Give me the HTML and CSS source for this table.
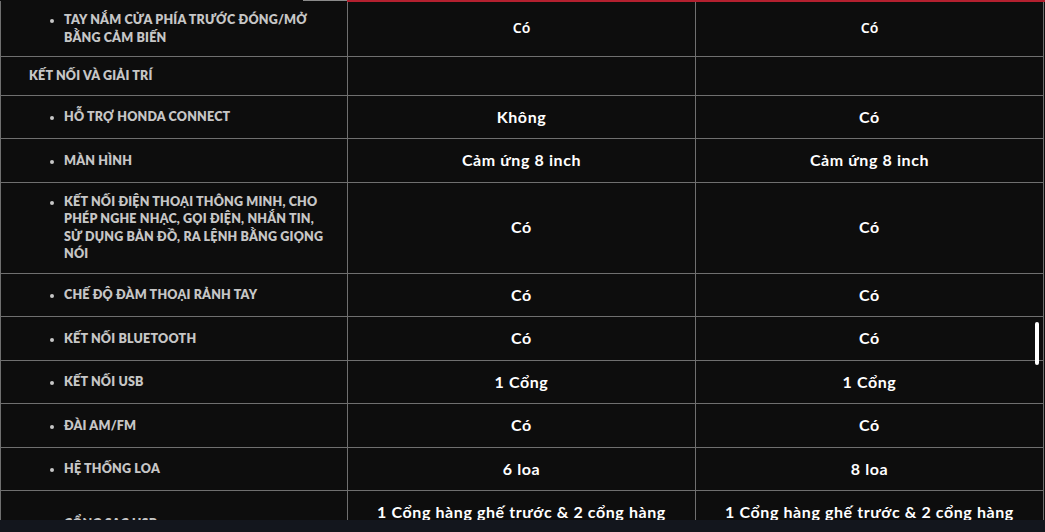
FILE: index.html
```html
<!DOCTYPE html>
<html lang="vi">
<head>
<meta charset="utf-8">
<title>Thông số kỹ thuật</title>
<link rel="stylesheet" href="styles.css">
</head>
<body>
<div class="page">
  <div class="viewport">
    <div class="top-edge">
      <span class="edge-grey"></span>
      <span class="edge-red"><span class="edge-red-thick"></span></span>
    </div>
    <table class="spec">
      <colgroup><col class="c1"><col class="c2"><col class="c3"></colgroup>
      <tbody>
        <tr>
          <td class="label"><ul><li>Tay nắm cửa phía trước đóng/mở bằng cảm biến</li></ul></td>
          <td class="val val-alt">Có</td>
          <td class="val val-alt">Có</td>
        </tr>
        <tr class="group">
          <td class="label group-title">Kết nối và giải trí</td>
          <td></td>
          <td></td>
        </tr>
        <tr>
          <td class="label"><ul><li>Hỗ trợ Honda Connect</li></ul></td>
          <td class="val">Không</td>
          <td class="val">Có</td>
        </tr>
        <tr>
          <td class="label"><ul><li>Màn hình</li></ul></td>
          <td class="val">Cảm ứng 8 inch</td>
          <td class="val">Cảm ứng 8 inch</td>
        </tr>
        <tr>
          <td class="label"><ul><li>Kết nối điện thoại thông minh, cho phép nghe nhạc, gọi điện, nhắn tin, sử dụng bản đồ, ra lệnh bằng giọng nói</li></ul></td>
          <td class="val">Có</td>
          <td class="val">Có</td>
        </tr>
        <tr>
          <td class="label"><ul><li>Chế độ đàm thoại rảnh tay</li></ul></td>
          <td class="val">Có</td>
          <td class="val">Có</td>
        </tr>
        <tr>
          <td class="label"><ul><li>Kết nối Bluetooth</li></ul></td>
          <td class="val">Có</td>
          <td class="val">Có</td>
        </tr>
        <tr>
          <td class="label"><ul><li>Kết nối USB</li></ul></td>
          <td class="val">1 Cổng</td>
          <td class="val">1 Cổng</td>
        </tr>
        <tr>
          <td class="label"><ul><li>Đài AM/FM</li></ul></td>
          <td class="val">Có</td>
          <td class="val">Có</td>
        </tr>
        <tr>
          <td class="label"><ul><li>Hệ thống loa</li></ul></td>
          <td class="val">6 loa</td>
          <td class="val">8 loa</td>
        </tr>
        <tr>
          <td class="label"><ul><li>Cổng sạc USB</li></ul></td>
          <td class="val">1 Cổng hàng ghế trước &amp; 2 cổng hàng ghế sau</td>
          <td class="val">1 Cổng hàng ghế trước &amp; 2 cổng hàng ghế sau</td>
        </tr>
      </tbody>
    </table>
    <div class="scroll-thumb"></div>
  </div>
  <div class="bottom-bar"></div>
</div>
</body>
</html>
```
FILE: styles.css
```css
html, body {
  margin: 0;
  padding: 0;
  background: #0d0d0d;
}

.page {
  height: 532px;
  display: flex;
  flex-direction: column;
  overflow: hidden;
}

.viewport {
  position: relative;
  height: 520px;
  overflow: hidden;
  flex: none;
}

.bottom-bar {
  height: 12px;
  background: #13161d;
  flex: none;
}

.top-edge {
  position: absolute;
  top: 0;
  left: 0;
  right: 0;
  height: 2px;
  z-index: 2;
}

.edge-grey {
  position: absolute;
  left: 303px;
  width: 44px;
  top: 0;
  height: 1px;
  background: #8a8a8a;
}

.edge-red {
  position: absolute;
  left: 347px;
  right: 0;
  top: 0;
  height: 1.5px;
  background: #b3202f;
}

.edge-red-thick {
  position: absolute;
  left: 224px;
  width: 33px;
  top: 0;
  height: 2px;
  background: #b3202f;
}

.spec {
  width: 1044px;
  border-collapse: collapse;
  table-layout: fixed;
  font-family: "Lato", "Liberation Sans", sans-serif;
}

.spec col.c1 { width: 347px; }
.spec col.c2 { width: 348px; }
.spec col.c3 { width: 348px; }

.spec td {
  border: 1px solid #6f6f6f;
  padding: 10px 28px;
  vertical-align: middle;
}

.spec tr:first-child td {
  border-top-color: #0d0d0d;
}

.label {
  color: #c6c6c6;
  font-size: 12.5px;
  line-height: 17.5px;
  font-weight: 800;
  text-transform: uppercase;
  letter-spacing: 0.2px;
}

.spec td.label {
  padding-right: 20px;
}

.label ul {
  margin: 0;
  padding: 0 0 0 35px;
  list-style: disc;
}

.label li::marker {
  font-size: 11px;
}

.val {
  color: #ffffff;
  font-size: 16px;
  line-height: 22.5px;
  font-weight: 700;
  letter-spacing: 0.6px;
  text-align: center;
}

.val-alt {
  font-family: "Noto Sans", "Lato", sans-serif;
  font-size: 14px;
  font-weight: 600;
  letter-spacing: 0;
}

.scroll-thumb {
  position: absolute;
  left: 1035px;
  top: 322px;
  width: 4px;
  height: 43px;
  border-radius: 2px;
  background: #ffffff;
  z-index: 2;
}
```
